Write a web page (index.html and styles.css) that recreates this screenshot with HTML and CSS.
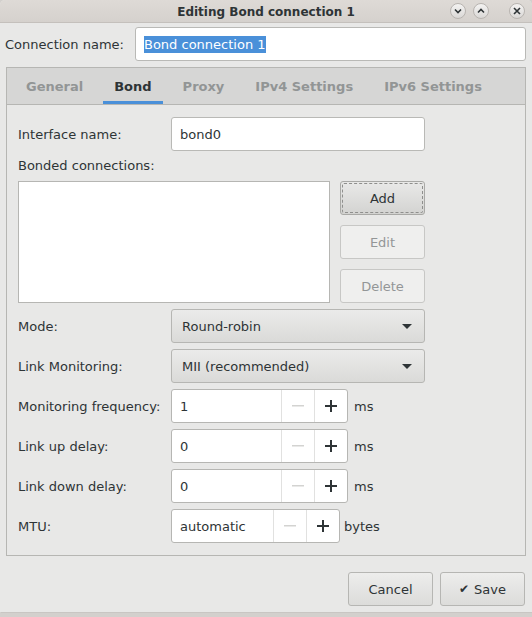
FILE: index.html
```html
<!DOCTYPE html>
<html>
<head>
<meta charset="utf-8">
<link rel="stylesheet" href="styles.css">
</head>
<body>
<div class="window">
  <div class="titlebar">
    <div></div>
    <div class="title">Editing Bond connection 1</div>
    <div class="controls">
      <span class="wbtn"><svg width="8" height="6" viewBox="0 0 8 6"><path d="M1 1.5 L4 4.5 L7 1.5" fill="none" stroke="#2e3436" stroke-width="1.6"/></svg></span>
      <span class="wbtn"><svg width="8" height="6" viewBox="0 0 8 6"><path d="M1 4.5 L4 1.5 L7 4.5" fill="none" stroke="#2e3436" stroke-width="1.6"/></svg></span>
      <span class="wbtn close"><svg width="8" height="8" viewBox="0 0 8 8"><path d="M1 1 L7 7 M7 1 L1 7" fill="none" stroke="#2e3436" stroke-width="1.6"/></svg></span>
    </div>
  </div>

  <div class="name-row">
    <label class="name-label">Connection name:</label>
    <div class="entry name-entry"><span class="sel">Bond connection 1</span></div>
  </div>

  <div class="notebook">
    <div class="tabs">
      <span class="tab">General</span>
      <span class="tab active">Bond</span>
      <span class="tab">Proxy</span>
      <span class="tab">IPv4 Settings</span>
      <span class="tab">IPv6 Settings</span>
    </div>
    <div class="page">
      <div class="row">
        <span class="lbl">Interface name:</span>
        <div class="entry field">bond0</div>
      </div>
      <div class="sub-lbl">Bonded connections:</div>
      <div class="list-row">
        <div class="listbox"></div>
        <div class="list-btns">
          <button class="btn focus"><span>Add</span></button>
          <button class="btn disabled">Edit</button>
          <button class="btn disabled">Delete</button>
        </div>
      </div>
      <div class="row gap">
        <span class="lbl">Mode:</span>
        <div class="combo field"><span>Round-robin</span><span class="arrow"></span></div>
      </div>
      <div class="row gap">
        <span class="lbl">Link Monitoring:</span>
        <div class="combo field"><span>MII (recommended)</span><span class="arrow"></span></div>
      </div>
      <div class="row gap">
        <span class="lbl">Monitoring frequency:</span>
        <div class="spin">
          <div class="spin-text">1</div>
          <div class="spin-btn minus"><svg width="12" height="2" viewBox="0 0 12 2"><rect width="12" height="1.5" fill="#d3d3d1"/></svg></div>
          <div class="spin-btn plus"><svg width="12" height="12" viewBox="0 0 12 12"><path d="M6 0 V12 M0 6 H12" stroke="#2e3436" stroke-width="2"/></svg></div>
        </div>
        <span class="unit">ms</span>
      </div>
      <div class="row gap">
        <span class="lbl">Link up delay:</span>
        <div class="spin">
          <div class="spin-text">0</div>
          <div class="spin-btn minus"><svg width="12" height="2" viewBox="0 0 12 2"><rect width="12" height="1.5" fill="#d3d3d1"/></svg></div>
          <div class="spin-btn plus"><svg width="12" height="12" viewBox="0 0 12 12"><path d="M6 0 V12 M0 6 H12" stroke="#2e3436" stroke-width="2"/></svg></div>
        </div>
        <span class="unit">ms</span>
      </div>
      <div class="row gap">
        <span class="lbl">Link down delay:</span>
        <div class="spin">
          <div class="spin-text">0</div>
          <div class="spin-btn minus"><svg width="12" height="2" viewBox="0 0 12 2"><rect width="12" height="1.5" fill="#d3d3d1"/></svg></div>
          <div class="spin-btn plus"><svg width="12" height="12" viewBox="0 0 12 12"><path d="M6 0 V12 M0 6 H12" stroke="#2e3436" stroke-width="2"/></svg></div>
        </div>
        <span class="unit">ms</span>
      </div>
      <div class="row gap">
        <span class="lbl">MTU:</span>
        <div class="spin">
          <div class="spin-text mtu">automatic</div>
          <div class="spin-btn minus"><svg width="12" height="2" viewBox="0 0 12 2"><rect width="12" height="1.5" fill="#d3d3d1"/></svg></div>
          <div class="spin-btn plus"><svg width="12" height="12" viewBox="0 0 12 12"><path d="M6 0 V12 M0 6 H12" stroke="#2e3436" stroke-width="2"/></svg></div>
        </div>
        <span class="unit bytes">bytes</span>
      </div>
    </div>
  </div>

  <div class="actions">
    <button class="btn action">Cancel</button>
    <button class="btn action"><span class="check">✔</span> Save</button>
  </div>
</div>
</body>
</html>
```

FILE: styles.css
```css
* { box-sizing: border-box; }
html, body { margin: 0; padding: 0; }
body {
  width: 532px;
  height: 617px;
  background: #d3d0cd;
  font-family: "DejaVu Sans", sans-serif;
  font-size: 13px;
  color: #2e3436;
  overflow: hidden;
}
.window {
  width: 532px;
  height: 612px;
  background: #e8e8e7;
  border-radius: 5px 5px 0 0;
  box-shadow: 1px 1px 0 #c9c6c3;
}
.titlebar {
  height: 23px;
  display: grid;
  grid-template-columns: 1fr auto 1fr;
  align-items: center;
  background: linear-gradient(#dedad6, #d5d1cd);
  border-bottom: 1px solid #c4c0bc;
  border-radius: 5px 5px 0 0;
}
.title {
  font-weight: bold;
  font-size: 12px;
  color: #2e3436;
  padding-top: 1px;
}
.controls {
  justify-self: end;
  display: flex;
  align-items: center;
  padding-right: 7px;
}
.wbtn {
  width: 16px;
  height: 16px;
  border-radius: 50%;
  border: 1px solid #b8b4b0;
  background: linear-gradient(#f4f3f2, #dad8d6);
  display: flex;
  align-items: center;
  justify-content: center;
  margin-left: 7px;
}
.wbtn.close { margin-left: 20px; }

.name-row {
  display: flex;
  align-items: center;
  padding: 4px 6px 0 5px;
}
.name-label { width: 130px; }
.entry {
  height: 34px;
  background: #ffffff;
  border: 1px solid #b9b9b6;
  border-radius: 3px;
  display: flex;
  align-items: center;
  padding-left: 8px;
}
.name-entry { flex: 1; }
.sel {
  background: #4a90d9;
  color: #ffffff;
  padding: 1px 0;
}

.notebook {
  margin: 6px 6px 0 6px;
  border: 1px solid #b6b6b3;
}
.tabs {
  height: 37px;
  background: #d6d6d5;
  border-bottom: 1px solid #b6b6b3;
  display: flex;
  align-items: stretch;
  padding-left: 8px;
  gap: 9px;
}
.tab {
  padding: 4px 11px 0 11px;
  font-weight: bold;
  color: #929595;
  display: flex;
  align-items: center;
  border-bottom: 3px solid transparent;
}
.tab.active {
  color: #2e3436;
  border-bottom-color: #4a90d9;
}
.page {
  padding: 12px 11px 12px 11px;
}
.row {
  display: flex;
  align-items: center;
  height: 34px;
}
.row.gap { margin-top: 6px; }
.lbl { width: 153px; flex: none; }
.field { width: 254px; }
.sub-lbl {
  line-height: 16px;
  margin: 7px 0;
}
.list-row {
  display: flex;
  gap: 10px;
}
.listbox {
  width: 312px;
  height: 122px;
  background: #ffffff;
  border: 1px solid #b6b6b3;
}
.list-btns {
  display: flex;
  flex-direction: column;
  gap: 10px;
}
.btn {
  font-family: "DejaVu Sans", sans-serif;
  font-size: 13px;
  color: #2e3436;
  width: 85px;
  height: 34px;
  border: 1px solid #b6b6b3;
  border-radius: 3px;
  background: linear-gradient(#ededec, #dcdcda);
  padding: 0;
  display: flex;
  align-items: center;
  justify-content: center;
}
.btn.focus {
  padding: 1px;
  background: linear-gradient(#e9e9e8, #d3d3d1);
  border-color: #a9a9a6;
}
.btn.focus span {
  flex: 1;
  height: 100%;
  display: flex;
  align-items: center;
  justify-content: center;
  border: 1px dashed #8f8f8d;
  border-radius: 2px;
}
.btn.disabled {
  background: #efefee;
  border-color: #c7c7c5;
  color: #939697;
}
.combo {
  height: 34px;
  border: 1px solid #b6b6b3;
  border-radius: 3px;
  background: linear-gradient(#ebebea, #dadad8);
  display: flex;
  align-items: center;
  justify-content: space-between;
  padding: 0 12px 0 10px;
}
.arrow {
  width: 0;
  height: 0;
  border-left: 5px solid transparent;
  border-right: 5px solid transparent;
  border-top: 5px solid #2e3436;
}
.spin {
  display: flex;
  height: 34px;
  background: #ffffff;
  border: 1px solid #b6b6b3;
  border-radius: 3px;
}
.spin-text {
  width: 109px;
  display: flex;
  align-items: center;
  padding-left: 8px;
}
.spin-text.mtu { width: 101px; }
.spin-btn {
  width: 33px;
  border-left: 1px solid #e1e1e0;
  display: flex;
  align-items: center;
  justify-content: center;
}
.unit { margin-left: 6px; }
.unit.bytes { margin-left: 4px; }

.actions {
  display: flex;
  justify-content: flex-end;
  gap: 7px;
  padding: 16px 7px 0 0;
}
.btn.action { width: 85px; }
.check { font-size: 12px; margin-right: 5px; }
```
